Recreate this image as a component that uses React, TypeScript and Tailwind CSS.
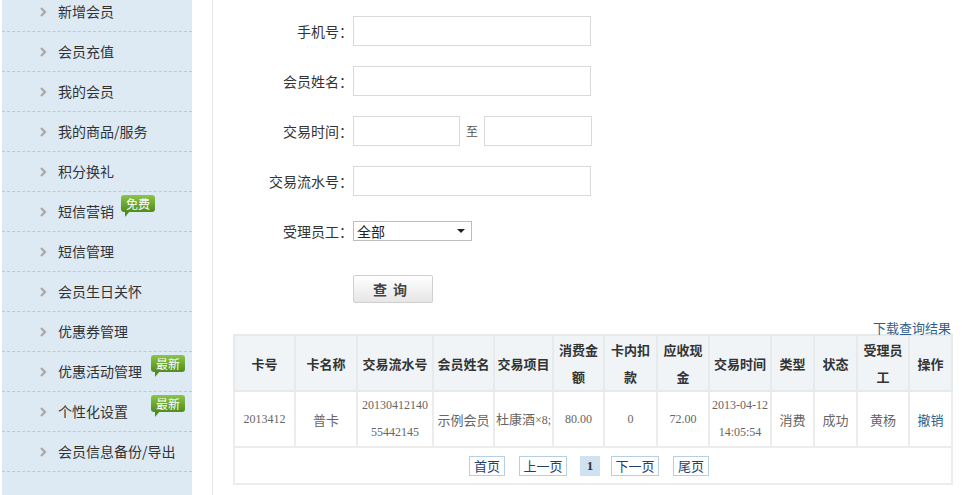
const menu = [
  { label: '新增会员' },
  { label: '会员充值' },
  { label: '我的会员' },
  { label: '我的商品/服务' },
  { label: '积分换礼' },
  { label: '短信营销', badge: '免费', badgeLeft: 'left-[119px]' },
  { label: '短信管理' },
  { label: '会员生日关怀' },
  { label: '优惠券管理' },
  { label: '优惠活动管理', badge: '最新', badgeLeft: 'left-[149px]' },
  { label: '个性化设置', badge: '最新', badgeLeft: 'left-[149px]' },
  { label: '会员信息备份/导出' },
]

const cols = [61, 62, 76, 61, 59, 51, 53, 52, 62, 43, 43, 52, 43]

const heads = [
  '卡号',
  '卡名称',
  '交易流水号',
  '会员姓名',
  '交易项目',
  '消费金\n额',
  '卡内扣\n款',
  '应收现\n金',
  '交易时间',
  '类型',
  '状态',
  '受理员\n工',
  '操作',
]

const serif = "font-['Liberation_Serif','Noto_Sans_CJK_SC',serif]"
const cell = 'border-2 border-[#ececec] p-0'

function Badge({ text, left }: { text: string; left: string }) {
  return (
    <span className={`absolute top-[3px] ${left} flex h-[17px] w-[34px] items-center justify-center rounded-[3px] bg-gradient-to-b from-[#8cc548] to-[#4e8d1c] text-[12px] leading-none text-white`}>
      {text}
      <span className="absolute bottom-[-5px] left-[4px] h-0 w-0 border-t-[6px] border-r-[5px] border-t-[#4e8d1c] border-r-transparent" />
    </span>
  )
}

function Field({ label, children }: { label: string; children: React.ReactNode }) {
  return (
    <div className="flex h-[30px] items-center">
      <div className="w-[140px] text-right text-[14px] text-[#333]">{label}</div>
      <div className="flex items-center">{children}</div>
    </div>
  )
}

export default function App() {
  return (
    <div className="flex h-[495px] w-[962px] overflow-hidden bg-white font-['Noto_Sans_CJK_SC',sans-serif]">
      <aside className="ml-[2px] h-full w-[190px] shrink-0 bg-[#dde9f3]">
        <ul className="mt-[-8px]">
          {menu.map((m) => (
            <li key={m.label} className="relative flex h-[40px] items-center border-b border-dashed border-[#b9cbd9]">
              <svg className="ml-[38px] mr-[11px]" width="7" height="10" viewBox="0 0 7 10">
                <path d="M1 1 L5 5 L1 9" fill="none" stroke="#a8a8a8" strokeWidth="2.2" />
              </svg>
              <span className="text-[14px] text-[#333]">{m.label}</span>
              {m.badge && <Badge text={m.badge} left={m.badgeLeft!} />}
            </li>
          ))}
        </ul>
      </aside>
      <div className="ml-[20px] h-full w-px shrink-0 bg-[#e6e6e6]" />
      <main className="flex-1">
        <div className="mt-[16px] flex flex-col gap-[20px]">
          <Field label="手机号：">
            <div className="h-[30px] w-[238px] border border-[#d9d9d9]" />
          </Field>
          <Field label="会员姓名：">
            <div className="h-[30px] w-[238px] border border-[#d9d9d9]" />
          </Field>
          <Field label="交易时间：">
            <div className="h-[30px] w-[107px] border border-[#d9d9d9]" />
            <span className="mx-[6px] text-[12px] text-[#555]">至</span>
            <div className="h-[30px] w-[108px] border border-[#d9d9d9]" />
          </Field>
          <Field label="交易流水号：">
            <div className="h-[30px] w-[238px] border border-[#d9d9d9]" />
          </Field>
          <Field label="受理员工：">
            <div className="flex h-[20px] w-[119px] items-center justify-between border border-[#bdbdbd] pl-[3px] pr-[6px] text-[14px] text-[#222]">
              <span>全部</span>
              <span className="h-0 w-0 border-x-[4px] border-t-[4px] border-x-transparent border-t-[#222]" />
            </div>
          </Field>
          <div className="ml-[140px] mt-[9px] flex h-[28px] w-[80px] items-center justify-center rounded-[2px] border border-[#cfcfcf] bg-gradient-to-b from-[#ffffff] to-[#e6e6e6] text-[14px] font-bold tracking-[6px] text-[#444]">
            查询
          </div>
        </div>
        <div className="ml-[20px] mt-[17px] w-[718px] text-right text-[13px] leading-[15px] text-[#2f5f8f]">下载查询结果</div>
        <table className="ml-[20px] mt-[-1px] w-[718px] table-fixed border-collapse border-2 border-[#eef1f3]">
          <colgroup>
            {cols.map((w, i) => (
              <col key={i} style={{ width: w }} />
            ))}
          </colgroup>
          <thead>
            <tr className="h-[56px] bg-[#f0f4f7]">
              {heads.map((h) => (
                <th key={h} className="whitespace-pre-line border-2 border-[#e6eaed] p-0 text-center text-[13px] font-bold leading-[27px] text-[#333]">
                  {h}
                </th>
              ))}
            </tr>
          </thead>
          <tbody>
            <tr className="h-[55px] text-center text-[13px] leading-[27px] text-[#666]">
              <td className={`${cell} ${serif} text-[12px]`}>2013412</td>
              <td className={cell}>普卡</td>
              <td className={`${cell} ${serif} text-[12px]`}>
                20130412140
                <br />
                55442145
              </td>
              <td className={cell}>示例会员</td>
              <td className={`${cell} whitespace-nowrap`}>
                杜康酒<span className={`${serif} text-[12px]`}>×8;</span>
              </td>
              <td className={`${cell} ${serif} text-[12px]`}>80.00</td>
              <td className={`${cell} ${serif} text-[12px]`}>0</td>
              <td className={`${cell} ${serif} text-[12px]`}>72.00</td>
              <td className={`${cell} ${serif} whitespace-nowrap text-[12px]`}>
                2013-04-12
                <br />
                14:05:54
              </td>
              <td className={cell}>消费</td>
              <td className={cell}>成功</td>
              <td className={cell}>黄杨</td>
              <td className={`${cell} text-[#2f5f8f]`}>撤销</td>
            </tr>
            <tr className="h-[37px]">
              <td colSpan={13} className={cell}>
                <div className="ml-[234px] flex items-center text-[13px] text-[#1f4170]">
                  <span className="flex h-[20px] w-[36px] items-center justify-center border border-[#b7cfe2]">首页</span>
                  <span className="ml-[14px] flex h-[20px] w-[48px] items-center justify-center border border-[#b7cfe2]">上一页</span>
                  <span className={`ml-[13px] flex h-[20px] w-[20px] items-center justify-center bg-[#cfe2f2] font-bold text-[#333] ${serif}`}>1</span>
                  <span className="ml-[11px] flex h-[20px] w-[48px] items-center justify-center border border-[#b7cfe2]">下一页</span>
                  <span className="ml-[14px] flex h-[20px] w-[36px] items-center justify-center border border-[#b7cfe2]">尾页</span>
                </div>
              </td>
            </tr>
          </tbody>
        </table>
      </main>
    </div>
  )
}
